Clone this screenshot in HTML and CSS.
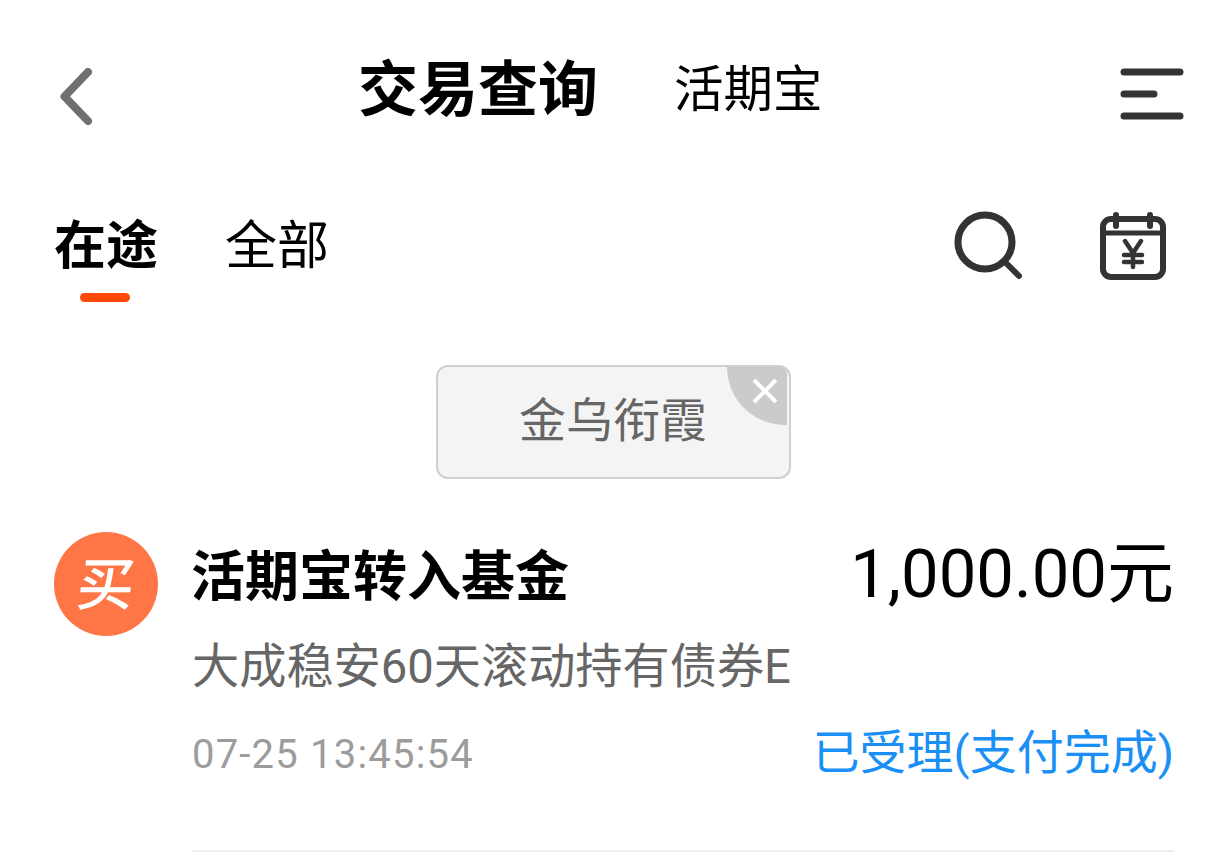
FILE: index.html
```html
<!DOCTYPE html>
<html lang="zh-CN">
<head>
  <meta charset="UTF-8">
  <meta name="viewport" content="width=device-width, initial-scale=1.0">
  <title>交易查询</title>
  <link rel="stylesheet" href="styles.css">
</head>
<body>
  <div class="header">
    <svg class="back-icon" width="34" height="58" viewBox="0 0 34 58">
      <path d="M29 4 L5.500 28.500 L29 53" fill="none" stroke="#707070" stroke-width="8" stroke-linecap="round" stroke-linejoin="round"/>
    </svg>
    <h1 class="title">交易查询</h1>
    <span class="subtitle">活期宝</span>
    <svg class="menu-icon" width="66" height="54" viewBox="0 0 66 54">
      <path d="M6 4 H62 M6 26 H36 M6 48 H62" fill="none" stroke="#333" stroke-width="7" stroke-linecap="round"/>
    </svg>
  </div>

  <div class="tabs">
    <div class="tab tab-active">在途</div>
    <div class="tab">全部</div>
    <svg class="search-icon" width="70" height="70" viewBox="0 0 70 70">
      <circle cx="31" cy="31" r="27" fill="none" stroke="#333" stroke-width="7"/>
      <path d="M50 50 L65 65" fill="none" stroke="#333" stroke-width="6" stroke-linecap="round"/>
    </svg>
    <svg class="calendar-icon" width="68" height="68" viewBox="0 0 68 68">
      <rect x="3" y="7" width="60" height="58" rx="8" fill="none" stroke="#333" stroke-width="6"/>
      <path d="M3 21 H63" fill="none" stroke="#333" stroke-width="5"/>
      <path d="M16 3 V14 M50 3 V14" fill="none" stroke="#333" stroke-width="6" stroke-linecap="round"/>
      <path d="M25 29 L33 41 L41 29 M33 41 V55 M24 43 H42 M24 50 H42" fill="none" stroke="#333" stroke-width="4.500" stroke-linecap="round" stroke-linejoin="round"/>
    </svg>
  </div>

  <div class="chip-row">
    <div class="chip">
      金乌衔霞
      <span class="chip-close">
        <svg width="26" height="26" viewBox="0 0 26 26">
          <path d="M2 2 L24 24 M24 2 L2 24" fill="none" stroke="#fff" stroke-width="4"/>
        </svg>
      </span>
    </div>
  </div>

  <div class="record">
    <div class="avatar"><span class="avatar-text">买</span></div>
    <div class="record-body">
      <div class="record-top">
        <span class="record-name">活期宝转入基金</span>
        <span class="record-amount">1,000.00元</span>
      </div>
      <div class="record-fund">大成稳安60天滚动持有债券E</div>
      <div class="record-bottom">
        <span class="record-time">07-25 13:45:54</span>
        <span class="record-status">已受理(支付完成)</span>
      </div>
    </div>
  </div>
</body>
</html>
```

FILE: styles.css
```css
body {
  margin: 0;
  height: 858px;
  overflow: hidden;
  background: #fff;
  font-family: "Roboto", "Noto Sans CJK SC", sans-serif;
  color: #000;
}
.header {
  display: flex;
  align-items: center;
  height: 60px;
  padding: 58px 44px 0 59px;
}
.back-icon {
  flex: none;
  margin-top: 18px;
  margin-right: 265px;
}
.title {
  margin: -8px 76px 0 0;
  font-size: 60px;
  font-weight: 700;
  white-space: nowrap;
}
.subtitle {
  margin-top: -6px;
  font-size: 49.500px;
  white-space: nowrap;
}
.menu-icon {
  flex: none;
  margin-top: 14px;
  margin-left: auto;
}
.tabs {
  display: flex;
  align-items: center;
  height: 70px;
  margin-top: 93px;
  padding: 0 60px 0 54px;
}
.tab {
  position: relative;
  margin-top: -10px;
  margin-right: 67px;
  font-size: 52px;
  white-space: nowrap;
}
.tab-active {
  font-weight: 700;
}
.tab-active::after {
  content: "";
  position: absolute;
  left: 26px;
  bottom: -23px;
  width: 50px;
  height: 9px;
  border-radius: 5px;
  background: #fd4a08;
}
.search-icon {
  flex: none;
  margin-left: auto;
  margin-right: 76px;
}
.calendar-icon {
  flex: none;
}
.chip-row {
  display: flex;
  justify-content: center;
  margin-top: 84px;
  padding-right: 2px;
}
.chip {
  position: relative;
  display: flex;
  align-items: center;
  justify-content: center;
  box-sizing: border-box;
  width: 355px;
  height: 114px;
  padding-bottom: 12px;
  overflow: hidden;
  border: 2px solid #cfcfcf;
  border-radius: 12px;
  background: #f4f4f4;
  font-size: 47px;
  color: #666;
}
.chip-close {
  position: absolute;
  top: 0;
  right: 2px;
  width: 60px;
  height: 58px;
  border-radius: 0 0 0 60px;
  background: #cbcbcb;
}
.chip-close svg {
  position: absolute;
  left: 25px;
  top: 11px;
}
.record {
  display: flex;
  gap: 34px;
  margin-top: 53px;
  padding: 0 54px;
}
.avatar {
  flex: none;
  display: flex;
  align-items: center;
  justify-content: center;
  box-sizing: border-box;
  width: 104px;
  height: 104px;
  padding-bottom: 8px;
  border-radius: 50%;
  background: #ff7646;
  color: #fff;
  font-family: "Noto Sans CJK SC", sans-serif;
  font-size: 57px;
  font-weight: 500;
}
.avatar-text {
  transform: skewX(-6deg);
}
.record-body {
  flex: 1;
  min-width: 0;
  height: 320px;
  border-bottom: 2px solid #eee;
  box-sizing: border-box;
}
.record-top {
  display: flex;
  justify-content: space-between;
  align-items: center;
  height: 80px;
}
.record-name {
  margin-left: -1px;
  font-size: 54px;
  font-weight: 700;
}
.record-amount {
  margin-top: -10px;
  font-size: 67px;
}
.record-fund {
  margin-top: 25px;
  font-size: 47.200px;
  line-height: 60px;
  color: #666;
  white-space: nowrap;
}
.record-bottom {
  display: flex;
  justify-content: space-between;
  align-items: center;
  margin-top: 27px;
  height: 60px;
}
.record-time {
  font-size: 40px;
  letter-spacing: 1.200px;
  color: #9c9c9c;
}
.record-status {
  margin-top: -11px;
  font-size: 47px;
  color: #1a8ff5;
}
```
